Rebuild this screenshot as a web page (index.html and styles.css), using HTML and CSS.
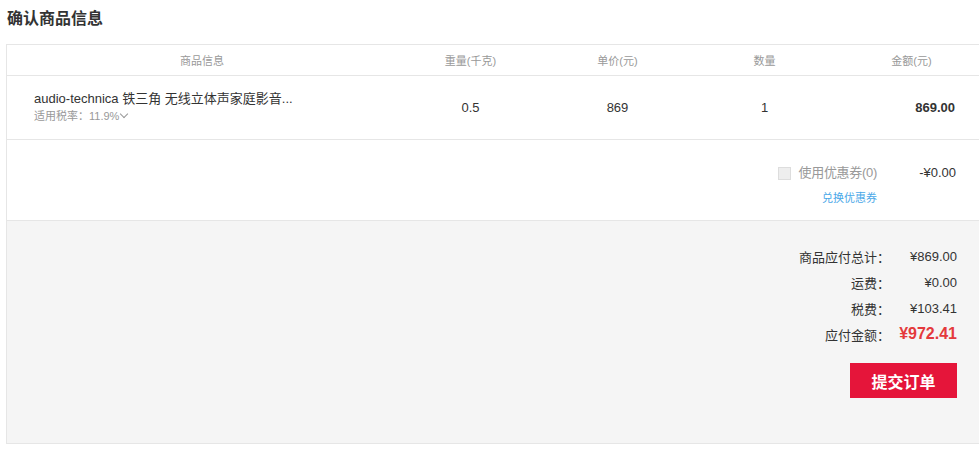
FILE: index.html
```html
<!DOCTYPE html>
<html lang="zh-CN">
<head>
    <meta charset="UTF-8">
    <meta name="viewport" content="width=device-width, initial-scale=1.0">
    <title>确认商品信息</title>
    <link rel="stylesheet" href="styles.css">
</head>
<body>

<h2 class="title">确认商品信息</h2>

<div class="order-box">
    <!-- 表头 -->
    <div class="order-head">
        <div class="col-info">商品信息</div>
        <div class="col">重量(千克)</div>
        <div class="col">单价(元)</div>
        <div class="col">数量</div>
        <div class="col">金额(元)</div>
    </div>

    <!-- 商品 -->
    <div class="order-item">
        <div class="col-info">
            <div class="item-name">audio-technica 铁三角 无线立体声家庭影音...</div>
            <div class="item-tax">适用税率：11.9%<span class="arrow"></span></div>
        </div>
        <div class="col">0.5</div>
        <div class="col">869</div>
        <div class="col">1</div>
        <div class="col col-amount">869.00</div>
    </div>

    <!-- 优惠券 -->
    <div class="coupon">
        <div class="coupon-line">
            <label class="coupon-check"><span class="checkbox"></span>使用优惠券(0)</label>
            <span class="coupon-value">-¥0.00</span>
        </div>
        <a href="#" class="coupon-link">兑换优惠券</a>
    </div>

    <!-- 合计 -->
    <div class="summary">
        <div class="sum-row"><span class="sum-label">商品应付总计：</span><span class="sum-value">¥869.00</span></div>
        <div class="sum-row"><span class="sum-label">运费：</span><span class="sum-value">¥0.00</span></div>
        <div class="sum-row"><span class="sum-label">税费：</span><span class="sum-value">¥103.41</span></div>
        <div class="sum-row"><span class="sum-label">应付金额：</span><span class="sum-value total">¥972.41</span></div>
        <button class="submit-button">提交订单</button>
    </div>
</div>

</body>
</html>
```

FILE: styles.css
```css
body {
    font-family: "Liberation Sans", Arial, "Noto Sans CJK SC", sans-serif;
    background-color: #fff;
    color: #333;
    margin: 0;
    padding: 0 0 0 6px;
    overflow: hidden;
}
.title {
    font-size: 16px;
    font-weight: bold;
    margin: 0;
    padding: 9px 0 0 1px;
    height: 35px;
    line-height: 20px;
}
.order-box {
    width: 978px;
    border: 1px solid #e6e6e6;
}
.order-head,
.order-item {
    display: grid;
    grid-template-columns: 390px repeat(4, 147px);
    align-items: center;
    border-bottom: 1px solid #e6e6e6;
}
.order-head {
    height: 30px;
    font-size: 11px;
    color: #999;
}
.order-head .col-info {
    text-align: center;
}
.col {
    text-align: center;
}
.order-item {
    height: 63px;
    font-size: 13px;
}
.order-item .col-info {
    padding-left: 27px;
}
.item-name {
    line-height: 18px;
    margin-top: -2px;
}
.item-tax {
    font-size: 11px;
    color: #999;
    line-height: 16px;
}
.arrow {
    display: inline-block;
    width: 5px;
    height: 5px;
    border-right: 1px solid #999;
    border-bottom: 1px solid #999;
    transform: rotate(45deg);
    margin: 0 0 3px 2px;
}
.col-amount {
    text-align: right;
    padding-right: 30px;
    font-weight: bold;
}
.coupon {
    height: 80px;
    border-bottom: 1px solid #e6e6e6;
    padding-right: 29px;
    text-align: right;
    font-size: 13px;
}
.coupon-line {
    display: flex;
    justify-content: flex-end;
    align-items: center;
    padding-top: 24px;
    line-height: 18px;
}
.coupon-check {
    display: flex;
    align-items: center;
    color: #999;
    letter-spacing: -0.3px;
}
.checkbox {
    width: 11px;
    height: 11px;
    border: 1px solid #ddd;
    background-color: #eee;
    margin-right: 8px;
}
.coupon-value {
    width: 79px;
    text-align: right;
}
.coupon-link {
    display: block;
    margin: 7px 79px 0 0;
    font-size: 11px;
    color: #4aa8e8;
    text-decoration: none;
}
.summary {
    height: 222px;
    background-color: #f5f5f5;
    padding: 22px 28px 0 0;
    box-sizing: border-box;
    text-align: right;
    font-size: 13px;
}
.sum-row {
    display: flex;
    justify-content: flex-end;
    align-items: center;
    height: 26px;
}
.sum-value {
    width: 67px;
}
.sum-value.total {
    color: #e4393c;
    font-size: 16px;
    font-weight: bold;
}
.submit-button {
    margin-top: 16px;
    width: 107px;
    height: 35px;
    background-color: #e5153a;
    color: white;
    border: none;
    font-family: inherit;
    font-size: 16px;
    font-weight: bold;
    cursor: pointer;
}
.submit-button:hover {
    background-color: #cc0f30;
}
```
